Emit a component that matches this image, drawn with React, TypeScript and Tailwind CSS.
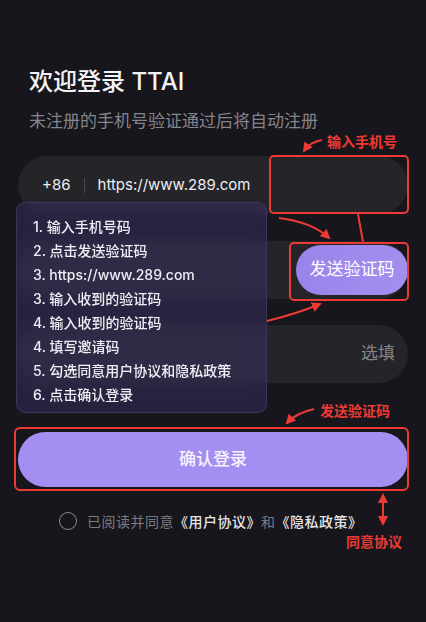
import React from "react";

const RED = "#ee3a35";

function Annotations() {
  return (
    <svg
      className="absolute left-0 top-0 pointer-events-none"
      width={426}
      height={622}
      viewBox="0 0 426 622"
      fill="none"
    >
      <defs>
        <marker id="ah" viewBox="0 0 10 10" refX="8" refY="5" markerWidth="5" markerHeight="5" orient="auto-start-reverse">
          <path d="M0 0 L10 5 L0 10 z" fill={RED} />
        </marker>
      </defs>
      <rect x={270} y={156} width={138} height={57} rx={4} stroke={RED} strokeWidth={2} />
      <rect x={290} y={243} width={118} height={57} rx={4} stroke={RED} strokeWidth={2} />
      <rect x={15} y={428} width={393} height={62} rx={5} stroke={RED} strokeWidth={2} />
      <line x1={358} y1={214} x2={363} y2={242} stroke={RED} strokeWidth={2} />
      <path d="M322 140 Q310 142 304 151" stroke={RED} strokeWidth={2} markerEnd="url(#ah)" />
      <path d="M279 218 Q312 222 329 238" stroke={RED} strokeWidth={2} markerEnd="url(#ah)" />
      <path d="M267 321 Q296 314 320 304" stroke={RED} strokeWidth={2} markerEnd="url(#ah)" />
      <path d="M314 409 Q296 413 287 423" stroke={RED} strokeWidth={2} markerEnd="url(#ah)" />
      <line x1={383} y1={495} x2={383} y2={524} stroke={RED} strokeWidth={2} markerStart="url(#ah)" markerEnd="url(#ah)" />
    </svg>
  );
}

export default function App() {
  const steps = [
    "1. 输入手机号码",
    "2. 点击发送验证码",
    "3. https://www.289.com",
    "3. 输入收到的验证码",
    "4. 输入收到的验证码",
    "4. 填写邀请码",
    "5. 勾选同意用户协议和隐私政策",
    "6. 点击确认登录",
  ];
  return (
    <div
      className="relative w-[426px] h-[622px] overflow-hidden bg-[#17161c] text-white"
      style={{ fontFamily: 'Inter, "Noto Sans CJK SC", sans-serif' }}
    >
      <div className="px-[18px]">
        <h1 className="pl-[11px] pt-[66px] text-[24px] leading-[32px] font-medium text-[#f4f4f6]">欢迎登录 TTAI</h1>
        <p className="pl-[11px] mt-[11px] text-[17px] leading-[24px] text-[#85848b]">未注册的手机号验证通过后将自动注册</p>

        <div className="mt-[23px] h-[58px] rounded-full bg-[#252429] flex items-center pl-[24px]">
          <span className="text-[15px] text-[#ededf0]">+86</span>
          <span className="mx-[13px] w-px h-[15px] bg-[#4a4950]" />
          <span className="text-[15px] text-[#ededf0]">https://www.289.com</span>
        </div>

        <div className="mt-[27px] h-[58px] rounded-full bg-[#252429] flex items-center justify-end">
          <button className="h-[50px] w-[112px] rounded-full bg-gradient-to-r from-[#9a83ea] to-[#a38ff0] text-[17px] text-white">
            发送验证码
          </button>
        </div>

        <div className="mt-[26px] h-[58px] rounded-full bg-[#252429] flex items-center justify-end pr-[13px]">
          <span className="text-[17px] text-[#85848b]">选填</span>
        </div>

        <button className="mt-[49px] w-full h-[55px] rounded-full bg-[#a48ef1] text-[17px] font-medium text-[#f6f3ff]">
          确认登录
        </button>

        <div className="mt-[24px] flex items-center pl-[41px] h-[20px]">
          <span className="w-[18px] h-[18px] rounded-full border-[1.5px] border-[#8a8990]" />
          <span className="ml-[10px] text-[14px] tracking-[0.5px] text-[#7c7b82]">
            已阅读并同意<span className="text-[#e6e6ea] font-medium">《用户协议》</span>和<span className="text-[#e6e6ea] font-medium">《隐私政策》</span>
          </span>
        </div>
      </div>

      <div className="absolute left-[16px] top-[202px] w-[251px] h-[211px] rounded-[9px] border border-[#3b365a] bg-[rgba(66,56,120,0.38)] backdrop-blur-sm pt-[12px] pl-[16px]">
        {steps.map((s, i) => (
          <div key={i} className="text-[14px] leading-[24px] font-medium text-[#efeef4]">
            {s}
          </div>
        ))}
      </div>

      <div className="absolute left-[327px] top-[132px] text-[14px] leading-[20px] font-bold text-[#ee3a35]">输入手机号</div>
      <div className="absolute left-[320px] top-[401px] text-[14px] leading-[20px] font-bold text-[#ee3a35]">发送验证码</div>
      <div className="absolute left-[346px] top-[532px] text-[14px] leading-[20px] font-bold text-[#ee3a35]">同意协议</div>

      <Annotations />
    </div>
  );
}
